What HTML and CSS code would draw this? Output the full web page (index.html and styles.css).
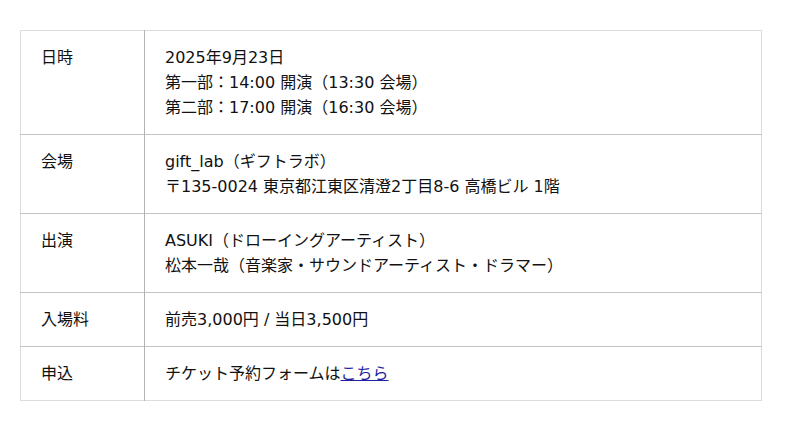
FILE: index.html
```html
<!DOCTYPE html>
<html lang="ja">
<head>
<meta charset="utf-8">
<link rel="stylesheet" href="styles.css">
</head>
<body>
<div class="page">
<table class="info">
  <tr>
    <th>日時</th>
    <td>2025年9月23日<br>第一部：14:00 開演（13:30 会場）<br>第二部：17:00 開演（16:30 会場）</td>
  </tr>
  <tr>
    <th>会場</th>
    <td>gift_lab（ギフトラボ）<br>〒135-0024 東京都江東区清澄2丁目8-6 高橋ビル 1階</td>
  </tr>
  <tr>
    <th>出演</th>
    <td>ASUKI（ドローイングアーティスト）<br>松本一哉（音楽家・サウンドアーティスト・ドラマー）</td>
  </tr>
  <tr>
    <th>入場料</th>
    <td>前売3,000円 / 当日3,500円</td>
  </tr>
  <tr>
    <th>申込</th>
    <td>チケット予約フォームは<a href="#" class="link">こちら</a></td>
  </tr>
</table>
</div>
</body>
</html>
```
FILE: styles.css
```css
html, body {
  margin: 0;
  padding: 0;
  background: #fff;
}
.page {
  padding: 30px 20px;
  font-family: "DejaVu Sans", "Noto Sans CJK JP", sans-serif;
  font-size: 16px;
  line-height: 25px;
  color: #111;
}
.info {
  width: 742px;
  border-collapse: collapse;
  border: 1px solid #dcdcdc;
}
.info th,
.info td {
  padding: 14px 20px;
  text-align: left;
  vertical-align: top;
  font-weight: normal;
  border-top: 1px solid #c4c4c4;
}
.info tr:first-child th,
.info tr:first-child td {
  border-top: 1px solid #dcdcdc;
}
.info th {
  width: 83px;
  border-right: 1px solid #b4b4b4;
}
.link {
  color: #1f1fa0;
  text-decoration: underline;
}
```
